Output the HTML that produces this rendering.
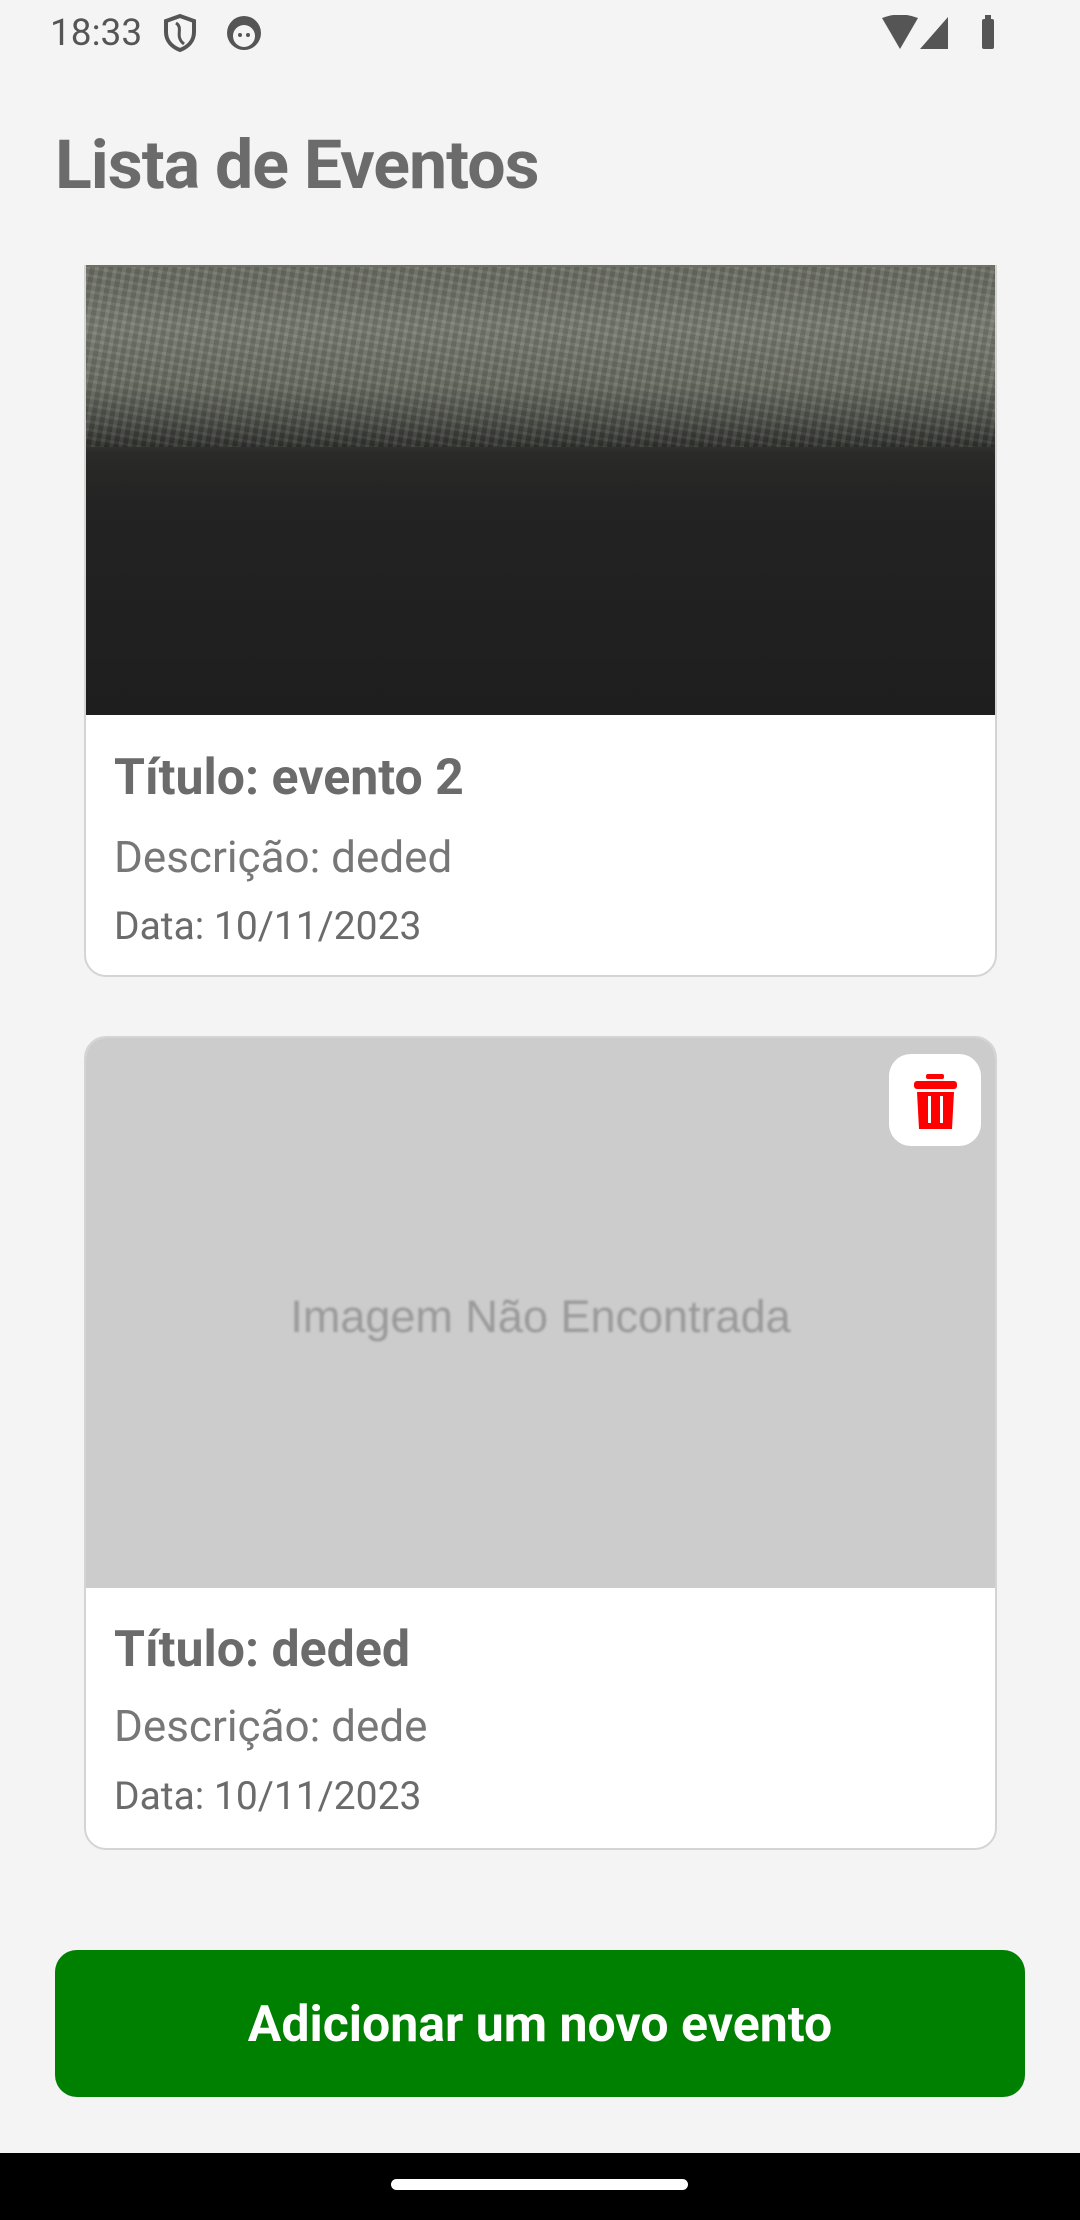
<!DOCTYPE html>
<html><head><meta charset="utf-8"><style>
*{margin:0;padding:0;box-sizing:border-box}
body{width:1080px;height:2220px;background:#f4f4f4;position:relative;overflow:hidden;font-family:"Roboto","Liberation Sans",sans-serif;color:#6b6b6b}
.abs{position:absolute}
.status{top:12px;left:50px;font-size:37px;color:#555}
h1{position:absolute;left:55px;top:125px;font-size:68px;font-weight:bold;color:#6b6b6b;letter-spacing:-1px}
.clip{position:absolute;left:0;top:265px;width:1080px;height:1600px;overflow:hidden}
.card{position:absolute;left:84px;width:913px;background:#fff;border:2px solid #d4d4d4;border-radius:22px;overflow:hidden}
.t{position:absolute;left:28px;font-weight:bold;font-size:50px;color:#6b6b6b}
.d{position:absolute;left:28px;font-size:44px;color:#777}
.dt{position:absolute;left:28px;font-size:39px;color:#6b6b6b}
.trash{position:absolute;width:92px;height:92px;background:#fff;border-radius:22px}
</style></head><body>
<div class="abs status">18:33</div>
<svg class="abs" style="left:163px;top:14px" width="34" height="38" viewBox="0 0 34 38"><path d="M17 2 L31 7 V18 C31 27 25 33 17 36 C9 33 3 27 3 18 V7 Z" fill="none" stroke="#555" stroke-width="4"/><path d="M13 9 C21 14 11 22 21 30" fill="none" stroke="#555" stroke-width="3"/></svg>
<svg class="abs" style="left:226px;top:15px" width="36" height="36" viewBox="0 0 36 36"><circle cx="18" cy="18" r="17" fill="#555"/><circle cx="18" cy="21" r="11" fill="#f4f4f4"/><circle cx="14" cy="20" r="2" fill="#555"/><circle cx="22" cy="20" r="2" fill="#555"/></svg>
<svg class="abs" style="left:880px;top:15px" width="135" height="37" viewBox="0 0 135 37"><path d="M2 3 Q20 -4 38 3 L20 34 Z" fill="#555"/><path d="M40 34 L68 2 V34 Z" fill="#555"/><rect x="102" y="4" width="12" height="30" rx="2" fill="#555"/><rect x="105" y="0" width="6" height="5" fill="#555"/></svg>
<h1>Lista de Eventos</h1>
<div class="clip">
 <div class="card" style="top:-300px;height:1012px">
  <div style="position:absolute;left:0;top:0;width:100%;height:748px;background:linear-gradient(180deg,#5c5f56 0%,#6e7167 42%,#7a7d72 48%,#6a6d63 56%,#4a4c46 61%,#2a2b29 65%,#222322 72%,#1e1e1e 100%)"></div>
  <div style="position:absolute;left:0;top:300px;width:100%;height:180px;opacity:.5;background:repeating-linear-gradient(100deg,rgba(255,255,255,0.12) 0 4px,rgba(0,0,0,0.15) 4px 9px),repeating-linear-gradient(10deg,rgba(255,255,255,0.1) 0 3px,rgba(0,0,0,0.12) 3px 8px);"></div>
  <div class="trash" style="left:802px;top:-60px"></div>
  <div class="t" style="top:782px">Título: evento 2</div>
  <div class="d" style="top:864px">Descrição: deded</div>
  <div class="dt" style="top:936px">Data: 10/11/2023</div>
 </div>
 <div class="card" style="top:771px;height:814px">
  <div style="position:absolute;left:0;top:0;width:100%;height:550px;background:#cccccc"></div>
  <div style="position:absolute;left:0;top:253px;width:100%;text-align:center;font-family:'Liberation Sans',sans-serif;font-size:45px;color:#9a9a9a;filter:blur(1px)">Imagem Não Encontrada</div>
  <div class="trash" style="left:803px;top:16px">
   <svg style="position:absolute;left:24px;top:20px" width="45" height="55" viewBox="0 0 45 55"><rect x="13" y="0" width="18" height="5" rx="2" fill="#f00"/><rect x="1" y="7" width="43" height="8" rx="3" fill="#f00"/><path d="M4 18 H41 L39 55 H6 Z" fill="#f00"/><rect x="15" y="22" width="3" height="27" fill="#fff"/><rect x="27" y="22" width="3" height="27" fill="#fff"/></svg>
  </div>
  <div class="t" style="top:583px">Título: deded</div>
  <div class="d" style="top:662px">Descrição: dede</div>
  <div class="dt" style="top:735px">Data: 10/11/2023</div>
 </div>
</div>
<div class="abs" style="left:55px;top:1950px;width:970px;height:147px;background:#008000;border-radius:22px;color:#fff;font-weight:bold;font-size:50px;text-align:center;line-height:150px">Adicionar um novo evento</div>
<div class="abs" style="left:0;top:2153px;width:1080px;height:67px;background:#000"></div>
<div class="abs" style="left:391px;top:2179px;width:297px;height:11px;background:#fff;border-radius:6px"></div>
</body></html>
